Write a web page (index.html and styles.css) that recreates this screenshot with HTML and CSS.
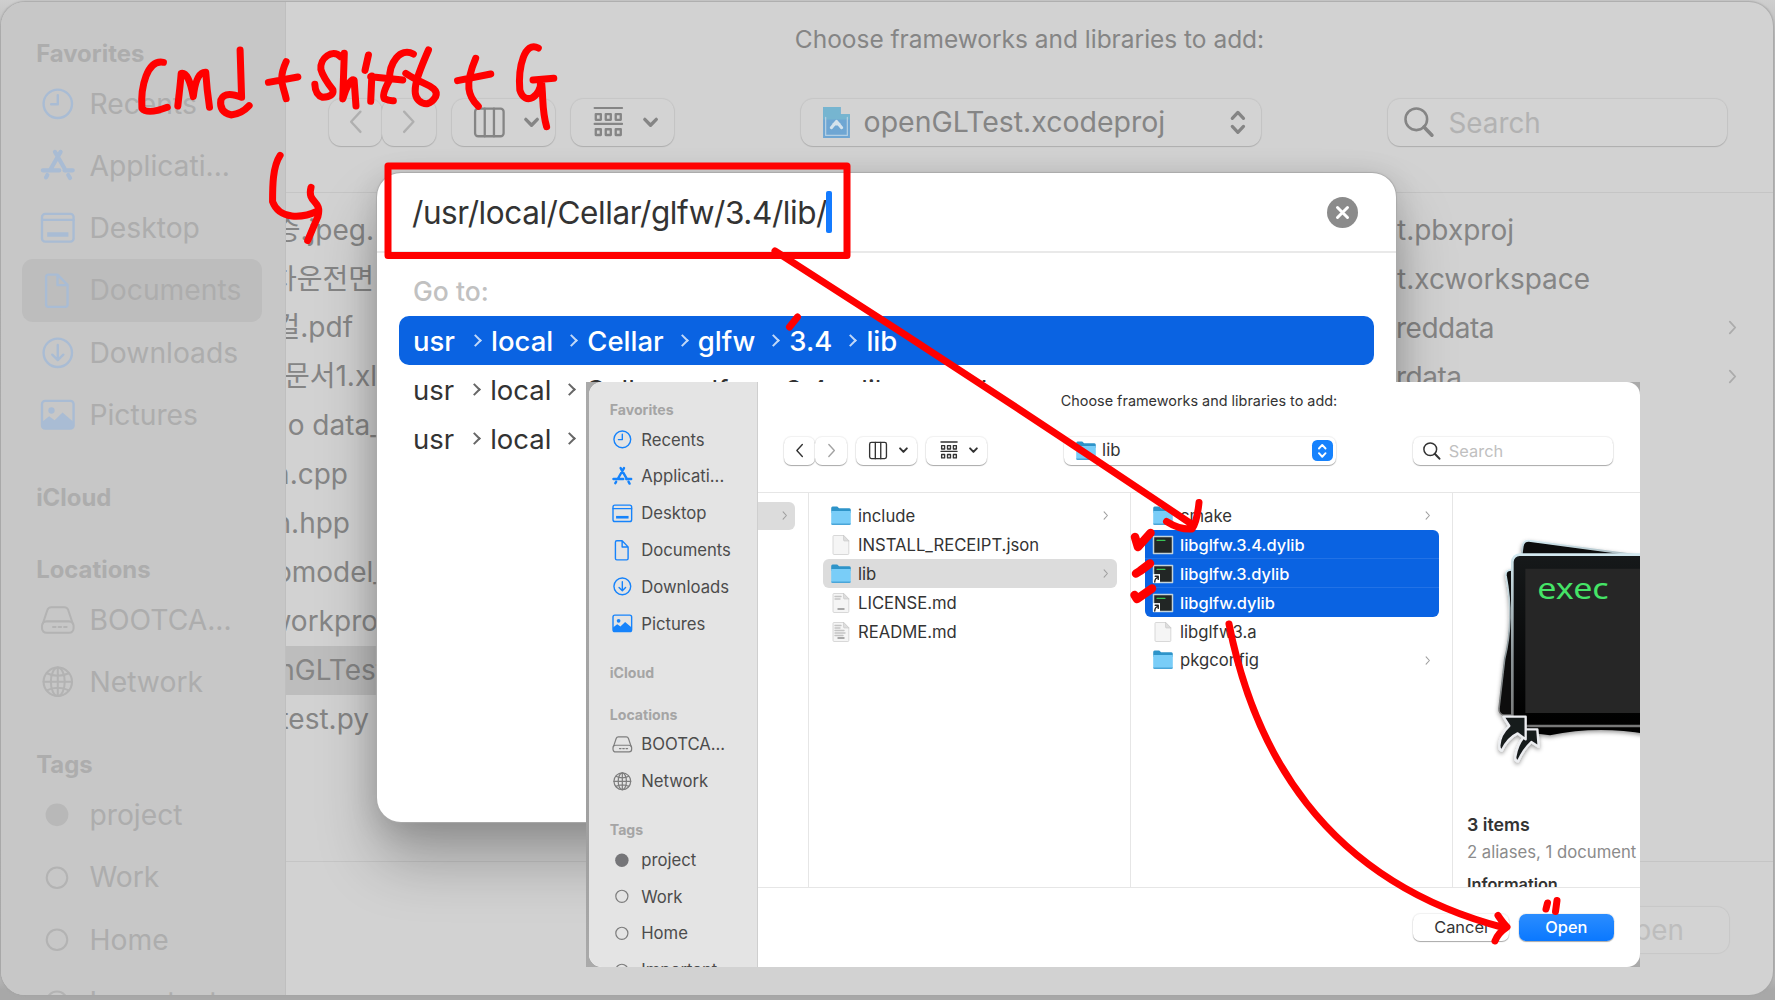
FILE: index.html
```html
<!DOCTYPE html>
<html lang="en">
<head>
<meta charset="utf-8">
<title>Choose frameworks and libraries to add</title>
<link rel="stylesheet" href="styles.css">
</head>
<body>
<svg class="sprite" aria-hidden="true">
  <symbol id="clock" viewBox="0 0 20 20"><circle cx="10" cy="10" r="9"/><path d="M10 4.500V10.300H5.800"/></symbol>
  <symbol id="apps" viewBox="0 0 20 20"><path stroke-width="2.600" d="M8.200 1.200L15 13M16.600 15.800l1.200 2M11.800 1.200L5.200 12.600M3.400 15.800l-.9 1.600M.5 12.900h10.500M14.200 12.900H19.500"/></symbol>
  <symbol id="desktop" viewBox="0 0 20 20"><rect x="0" y="1.200" width="20" height="17.600" rx="2"/><path d="M0 5h20"/><path stroke-width="2.800" stroke-linecap="butt" d="M3.300 14.200h13.400"/></symbol>
  <symbol id="doc" viewBox="0 0 20 20"><path d="M2.600 1.300a1.500 1.500 0 0 1 1.500-1.500h5.700l6.400 6.500v12.400a1.500 1.500 0 0 1-1.500 1.500H4.100a1.500 1.500 0 0 1-1.500-1.500zM9.800 0v6.400h6.400"/></symbol>
  <symbol id="down" viewBox="0 0 20 20"><circle cx="10" cy="10" r="9"/><path d="M10 5v9.500M6.500 11.200L10 14.700l3.500-3.500"/></symbol>
  <symbol id="pic" viewBox="0 0 20 20"><rect x="0" y="1.200" width="20" height="17.600" rx="2"/><circle cx="6" cy="7.300" r="2" fill="currentColor" stroke="none"/><path fill="currentColor" stroke="none" d="M0 14.500l4.500-3.500 3.500 2.500 5-5 7 6V18.500H0z"/></symbol>
  <symbol id="disk" viewBox="0 0 20 20"><rect x="0" y="11" width="20" height="7.200" rx="2.800"/><path d="M.5 12.500L3.400 3.800Q4 2 5.800 2h8.400q1.800 0 2.400 1.800L19.500 12.500"/><path d="M7 14.600h1.600M10.500 14.600h1.600M14 14.600h1.600"/></symbol>
  <symbol id="globe" viewBox="0 0 20 20"><circle cx="10" cy="10" r="9"/><ellipse cx="10" cy="10" rx="4.400" ry="9"/><path d="M10 1v18M1 10h18M3 4.600q7 3.200 14 0M3 15.400q7-3.200 14 0"/></symbol>
  <symbol id="dot" viewBox="0 0 20 20"><circle cx="9.500" cy="10" r="7.200" fill="currentColor" stroke="none"/></symbol>
  <symbol id="ring" viewBox="0 0 20 20"><circle cx="9.500" cy="10" r="6.500"/></symbol>
  <symbol id="left" viewBox="0 0 10 16"><path d="M8 1.500L2 8l6 6.500"/></symbol>
  <symbol id="right" viewBox="0 0 10 16"><path d="M2 1.500L8 8l-6 6.500"/></symbol>
  <symbol id="chev" viewBox="0 0 10 7"><path stroke-width="2.200" d="M1.200 1.400L5 5.300l3.800-3.900"/></symbol>
  <symbol id="cols" viewBox="0 0 20 18"><rect x=".7" y="0" width="18.600" height="18" rx="2"/><path d="M7 0v18M13 0v18"/></symbol>
  <symbol id="group" viewBox="0 0 20 20"><path d="M.500 0h19M.500 11h19"/><path stroke-width="1.600" d="M1.300 4.200h3.500v4H1.300zM8.200 4.200h3.500v4H8.200zM15.100 4.200h3.500v4h-3.500zM1.300 14.700h3.500v4H1.300zM8.200 14.700h3.500v4H8.200zM15.100 14.700h3.500v4h-3.500z"/></symbol>
  <symbol id="updown" viewBox="0 0 12 20"><path stroke-width="2.400" d="M1.800 7L6 2.500 10.200 7M1.800 13L6 17.500l4.200-4.500"/></symbol>
  <symbol id="search" viewBox="0 0 20 20"><circle cx="8.200" cy="8.200" r="7.200" stroke-width="1.700"/><path stroke-width="2.400" d="M13.300 13.300L18.600 18.800"/></symbol>
  <symbol id="folder" viewBox="0 0 20 20"><path fill="#2e94c9" d="M.2 2.200Q.2.600 1.600.600h4.600l1.900 1.600h10.300q1.400 0 1.400 1.600v3H.2z"/><path fill="#79cdf8" d="M.2 5h19.600v12.500q0 1.300-1.300 1.300H1.500Q.2 18.800.2 17.500z"/><path fill="#4aa5d8" d="M.2 17.500h19.600q-.2 1.600-1.400 1.600H1.600Q.4 19.100.2 17.500z"/></symbol>
  <symbol id="file" viewBox="0 0 20 20"><path fill="#f5f5f5" stroke="#cfcfcf" stroke-width=".8" d="M2 1.200Q2 .5 2.700.5h9.800L17.800 6v12.600q0 .9-.9.900H2.900Q2 19.500 2 18.600z"/><path fill="#ddd" stroke="#c6c6c6" stroke-width=".6" d="M12.500.5V5q0 1 1 1h4.300z"/></symbol>
  <symbol id="filetext" viewBox="0 0 20 20"><use href="#file"/><path stroke="#c4c4c4" stroke-width="1.400" d="M4 3.500h6M4 6h5"/><path stroke="#8e8e8e" stroke-width="1.400" d="M7 16h6"/></symbol>
  <symbol id="filedense" viewBox="0 0 20 20"><use href="#filetext"/><path stroke="#c4c4c4" stroke-width="1.400" d="M4 8.500h9M4 11h10M4 13.500h8"/></symbol>
  <symbol id="term" viewBox="0 0 20 18"><rect x=".5" y=".5" width="19" height="17" fill="#222625" stroke="#c3d3da"/><path stroke="#39c455" stroke-width="1.200" stroke-dasharray="2 .6" d="M4 4.300h8"/></symbol>
  <symbol id="alias" viewBox="0 0 8 10"><path fill="#fff" d="M0 0h8v10H0z"/><path stroke="#222" stroke-width="1.600" d="M2 9q0-4 4-5.500M2.500 2.500H6V6"/></symbol>
</svg>

<main class="screen">
  <section class="dialog back">
    <aside class="sidebar">
      <h2>Favorites</h2>
      <ul>
        <li><svg><use href="#clock"/></svg>Recents</li>
        <li><svg><use href="#apps"/></svg>Applicati...</li>
        <li><svg><use href="#desktop"/></svg>Desktop</li>
        <li class="current"><svg><use href="#doc"/></svg>Documents</li>
        <li><svg><use href="#down"/></svg>Downloads</li>
        <li><svg><use href="#pic"/></svg>Pictures</li>
      </ul>
      <h2>iCloud</h2>
      <h2>Locations</h2>
      <ul class="plain">
        <li><svg><use href="#disk"/></svg>BOOTCA...</li>
        <li><svg><use href="#globe"/></svg>Network</li>
      </ul>
      <h2>Tags</h2>
      <ul class="plain">
        <li class="tag"><svg><use href="#dot"/></svg>project</li>
        <li><svg><use href="#ring"/></svg>Work</li>
        <li><svg><use href="#ring"/></svg>Home</li>
        <li><svg><use href="#ring"/></svg>Important</li>
      </ul>
    </aside>
    <div class="pane">
      <h1>Choose frameworks and libraries to add:</h1>
      <div class="toolbar">
        <button class="nav faint"><svg><use href="#left"/></svg></button><button class="nav faint"><svg><use href="#right"/></svg></button>
        <button class="view"><svg class="glyph"><use href="#cols"/></svg><svg class="caret"><use href="#chev"/></svg></button>
        <button class="view"><svg class="glyph"><use href="#group"/></svg><svg class="caret"><use href="#chev"/></svg></button>
        <div class="popup"><svg class="proj" viewBox="0 0 26 30"><path fill="#6fa6d3" d="M0 0h17v7h9v23H0z"/><path fill="#76b5d0" d="M0 0h17v7h9v5H0z"/><path fill="none" stroke="#b4cfe3" stroke-width="1.200" d="M2.500 10v17.500h21V10"/><path fill="none" stroke="#d5e2ec" stroke-width="3" d="M8 20l5-6 5 6M10.500 16.500h5"/></svg><span>openGLTest.xcodeproj</span><i class="stepper"><svg><use href="#updown"/></svg></i></div>
        <div class="search"><svg><use href="#search"/></svg><span>Search</span></div>
      </div>
      <div class="browser">
        <ul class="clipped">
          <li style="--end:3px">증.jpeg.</li>
          <li style="--end:3px">차운전면</li>
          <li style="--end:24px">컬.pdf</li>
          <li style="--end:0px">문서1.xl</li>
          <li style="--end:-6px">o data_</li>
          <li style="--end:29px">n.cpp</li>
          <li style="--end:27px">n.hpp</li>
          <li style="--end:-9px">omodel_</li>
          <li style="--end:-1px">workpro</li>
          <li class="current" style="--end:-8px">nGLTest</li>
          <li style="--end:8px">test.py</li>
        </ul>
        <ul class="project">
          <li>t.pbxproj</li>
          <li>t.xcworkspace</li>
          <li class="tight">reddata<svg><use href="#right"/></svg></li>
          <li class="tight">rdata<svg><use href="#right"/></svg></li>
        </ul>
      </div>
      <footer><button class="push">Open</button></footer>
    </div>
  </section>

  <section class="goto">
    <header><span class="path">/usr/local/Cellar/glfw/3.4/lib/</span><i class="cursor"></i>
      <svg class="clear" viewBox="0 0 31 31"><circle cx="15.500" cy="15.500" r="15.500"/><path d="M10.500 10.500l10 10M20.500 10.500l-10 10"/></svg></header>
    <h2>Go to:</h2>
    <ol class="on"><li>usr</li><li>local</li><li>Cellar</li><li>glfw</li><li>3.4</li><li>lib</li></ol>
    <ol><li>usr</li><li>local</li><li>Cellar</li><li>glfw</li><li>3.4</li><li>lib</li><li>cmake</li></ol>
    <ol><li>usr</li><li>local</li><li></li></ol>
  </section>

  <div class="inset">
  <section class="dialog front">
    <aside class="sidebar">
      <h2>Favorites</h2>
      <ul>
        <li><svg><use href="#clock"/></svg>Recents</li>
        <li><svg><use href="#apps"/></svg>Applicati...</li>
        <li><svg><use href="#desktop"/></svg>Desktop</li>
        <li><svg><use href="#doc"/></svg>Documents</li>
        <li><svg><use href="#down"/></svg>Downloads</li>
        <li><svg><use href="#pic"/></svg>Pictures</li>
      </ul>
      <h2>iCloud</h2>
      <h2>Locations</h2>
      <ul class="plain">
        <li><svg><use href="#disk"/></svg>BOOTCA...</li>
        <li><svg><use href="#globe"/></svg>Network</li>
      </ul>
      <h2>Tags</h2>
      <ul class="plain">
        <li class="tag"><svg><use href="#dot"/></svg>project</li>
        <li><svg><use href="#ring"/></svg>Work</li>
        <li><svg><use href="#ring"/></svg>Home</li>
        <li><svg><use href="#ring"/></svg>Important</li>
      </ul>
    </aside>
    <div class="pane">
      <h1>Choose frameworks and libraries to add:</h1>
      <div class="toolbar">
        <button class="nav"><svg><use href="#left"/></svg></button><button class="nav faint"><svg><use href="#right"/></svg></button>
        <button class="view"><svg class="glyph"><use href="#cols"/></svg><svg class="caret"><use href="#chev"/></svg></button>
        <button class="view"><svg class="glyph"><use href="#group"/></svg><svg class="caret"><use href="#chev"/></svg></button>
        <div class="popup"><svg class="fold"><use href="#folder"/></svg><span>lib</span><i class="stepper"><svg><use href="#updown"/></svg></i></div>
        <div class="search"><svg><use href="#search"/></svg><span>Search</span></div>
      </div>
      <div class="browser">
        <ul class="files parent"><li class="current"><svg class="more"><use href="#right"/></svg></li></ul>
        <ul class="files">
          <li><svg><use href="#folder"/></svg>include<svg class="more"><use href="#right"/></svg></li>
          <li><svg><use href="#file"/></svg>INSTALL_RECEIPT.json</li>
          <li class="current"><svg><use href="#folder"/></svg>lib<svg class="more"><use href="#right"/></svg></li>
          <li><svg><use href="#filetext"/></svg>LICENSE.md</li>
          <li><svg><use href="#filedense"/></svg>README.md</li>
        </ul>
        <ul class="files">
          <li><svg><use href="#folder"/></svg>cmake<svg class="more"><use href="#right"/></svg></li>
          <li class="picked first"><svg><use href="#term"/></svg>libglfw.3.4.dylib</li>
          <li class="picked"><svg><use href="#term"/></svg><svg class="badge"><use href="#alias"/></svg>libglfw.3.dylib</li>
          <li class="picked last"><svg><use href="#term"/></svg><svg class="badge"><use href="#alias"/></svg>libglfw.dylib</li>
          <li><svg><use href="#file"/></svg>libglfw3.a</li>
          <li><svg><use href="#folder"/></svg>pkgconfig<svg class="more"><use href="#right"/></svg></li>
        </ul>
        <div class="preview">
          <svg class="stack" viewBox="9 0 561 780">
            <defs>
              <filter id="soft" x="-20%" y="-20%" width="140%" height="140%"><feDropShadow dx="0" dy="6" stdDeviation="7" flood-opacity=".4"/></filter>
              <linearGradient id="edge" x1="0" y1="0" x2="0" y2="1"><stop offset="0" stop-color="#d3e9f0"/><stop offset=".6" stop-color="#8b9497"/><stop offset="1" stop-color="#777"/></linearGradient>
              <linearGradient id="ink" x1="0" y1="0" x2="0" y2="1"><stop offset="0" stop-color="#16191a"/><stop offset="1" stop-color="#000"/></linearGradient>
            </defs>
            <g filter="url(#soft)">
              <path fill="#080909" stroke="url(#edge)" stroke-width="6" d="M214 110l4-32q3-18 24-15l330 44v80H214z"/>
              <path fill="#080909" stroke="url(#edge)" stroke-width="5" d="M190 148l-14 3q-10 3-8 16 25 130-4 250L147 565q-1 15 12 20h60z"/>
              <path fill="#000" d="M190 590h400v52q-150-26-290 4l-80-10z"/>
            </g>
            <rect x="187" y="104" width="440" height="514" rx="22" fill="url(#ink)" stroke="url(#edge)" stroke-width="8"/>
            <path fill="#262626" d="M226 146h360v433H226z"/>
            <text x="262" y="237" textLength="214" lengthAdjust="spacingAndGlyphs">exec</text>
            <g fill="#181a1e" stroke="#eceef1" stroke-width="7" stroke-linejoin="round" filter="url(#soft)">
              <path d="M222 628h40l4 52-22-14q-24 22-40 58-10-2-8-14 5-35 26-60z"/>
              <path d="M160 590h67v68l-24-18q-30 14-48 52-8-4-7-16 2-32 30-58z"/>
            </g>
          </svg>
          <h3>3 items</h3>
          <p>2 aliases, 1 document</p>
          <h4>Information</h4>
        </div>
      </div>
      <footer><button class="push">Cancel</button><button class="push default">Open</button></footer>
    </div>
  </section>
  </div>

  <svg class="ink" viewBox="0 0 1775 1000">
    <rect x="388" y="166" width="459" height="89.500"/>
    <g transform="scale(.3775 .3333)">
      <path d="M433 187C390 178 372 260 376 325Q390 345 443 322"/>
      <path d="M471 318Q478 250 480 220Q500 215 512 290Q520 215 545 217Q548 270 555 322"/>
      <path d="M636 150L640 292Q595 272 585 300Q580 335 612 345Q640 342 660 317"/>
      <path d="M711 247L789 231M758 185C736 240 750 255 758 296"/>
      <path d="M902 170C880 145 847 175 850 208Q855 230 882 270Q885 290 855 292Q835 285 834 253"/>
      <path d="M912 160L908 297Q925 235 938 240L943 318M976 165L967 211M985 228L982 304M982 230L1067 240"/>
      <path d="M1095 162C1060 140 1030 190 1032 240Q1010 285 1018 296Q1030 303 1042 302"/>
      <path d="M1135 150C1110 215 1085 280 1110 302Q1135 325 1154 290C1165 260 1120 255 1075 220"/>
      <path d="M1212 242L1300 222M1260 175C1230 255 1240 290 1267 319"/>
      <path d="M1426 144C1390 122 1372 200 1377 270C1390 320 1435 290 1432 242M1412 240L1467 235M1434 240C1440 300 1435 330 1448 380"/>
      <path d="M742 466C722 500 722 560 722 605C740 660 800 655 842 633"/>
      <path d="M824 562C812 610 855 600 842 650L815 722"/>
    </g>
    <path d="M775 251Q985 385 1193 525M1166.500 521.500Q1180 530 1192 529Q1197 522 1199 502.500"/>
    <path class="bold" d="M1135 537L1138 547L1150.500 533M1136 573.500L1140 571L1150 563.500M1134.500 595L1137 599L1152 588.500"/>
    <path d="M797.500 317L789.500 327"/>
    <path d="M1229 624C1253 745 1320 880 1505 928M1498 915.500Q1503 923 1507 927Q1498 933 1495 941"/>
    <path d="M1547.500 903L1546 909M1557 900.500L1555.500 911.500"/>
  </svg>
</main>
</body>
</html>
```
FILE: styles.css
```css
* { box-sizing: border-box; }
body { margin: 0; font-family: Inter, "Noto Sans CJK KR", sans-serif; }
h1, h2, h3, h4, p, ul, ol { margin: 0; padding: 0; list-style: none; white-space: nowrap; }
button { font: inherit; color: inherit; padding: 0; }
svg { fill: none; stroke: currentColor; stroke-width: 1.5; stroke-linecap: round; stroke-linejoin: round; flex: none; overflow: visible; }
symbol { overflow: visible; }
.sprite { position: absolute; width: 0; height: 0; }
.screen { position: relative; width: 1775px; height: 1000px; overflow: hidden; background: linear-gradient(#cfcfcf 0, #bbb 40px, #b4b4b4 980px, #a8a8a8 990px); }

/* File dialog, sized in multiples of --u (one point of the window) */
.dialog { display: flex; overflow: hidden; background: var(--bg); color: var(--text); }
.back {
  --u: 2.224px; --bg: #d2d2d2; --side: #c7c7c7; --side-edge: #bfbfbf; --text: #858585; --muted: #b2b2b2; --label: #adadad;
  --head: #adadad; --tint: #a9bcd4; --plain: #b3b3b3; --tag: #b8b8b8; --line: #c5c5c5; --current: #bdbdbd; --btn: #d3d3d3; --shade: rgba(0,0,0,.13);
  position: absolute; left: 1px; top: 2px; width: 1772px; height: 993px; border-radius: 24px; box-shadow: 0 0 2px 1px #a4a4a4;
}
.inset { position: absolute; left: 586px; top: 382px; width: 1054px; height: 585px; overflow: hidden; background: linear-gradient(#aaa, #a0a0a0 80%, #aaa); display: flex; padding-left: 3px; }
.front {
  --u: 1.311px; --bg: #fff; --side: #e4e4e4; --side-edge: #cfcfcf; --text: #333; --muted: #c0c0c0; --label: #4c4c4c;
  --head: #a5a5a5; --tint: #1683fb; --plain: #7d7d7d; --tag: #757578; --line: #e6e6e6; --current: #dcdcdc; --btn: #fff; --shade: rgba(0,0,0,.3);
  width: 1051px; height: 585px; border-radius: 13px;
}
.sidebar { background: var(--side); border-right: 1px solid var(--side-edge); color: var(--label); flex: none; position: relative; }
.back .sidebar { width: 285px; padding-top: 32.700px; }
.front .sidebar { --u: 1.3135px; width: 169px; padding-top: 17px; }
.sidebar h2 { font-size: calc(var(--u) * 10.750); font-weight: 650; height: calc(var(--u) * 17); line-height: calc(var(--u) * 17); padding-left: calc(var(--u) * 15.800); color: var(--head); margin-bottom: calc(var(--u) * 15); }
.sidebar h2:has(+ ul) { margin-bottom: 0; }
.sidebar ul { margin-bottom: calc(var(--u) * 15); }
.sidebar li { display: flex; align-items: center; gap: calc(var(--u) * 7.100); height: calc(var(--u) * 28); margin: 0 calc(var(--u) * 10.200) 0 calc(var(--u) * 9.300); padding-left: calc(var(--u) * 9.200); border-radius: calc(var(--u) * 5); font-size: calc(var(--u) * 12.700); }
.sidebar li svg { width: calc(var(--u) * 14.200); height: calc(var(--u) * 14.200); color: var(--tint); }
.sidebar .plain svg { color: var(--plain); stroke-width: 1.300; }
.sidebar .tag svg { color: var(--tag); }
.current { background: var(--current); }

.pane { flex: 1; display: flex; flex-direction: column; min-width: 0; }
.pane h1 { font-size: calc(var(--u) * 11); font-weight: 400; text-align: center; line-height: 28px; }
.back h1 { padding-top: 23px; height: 97px; }
.front h1 { padding-top: 5px; height: 55px; }
.toolbar { display: flex; padding: 0 calc(var(--u) * 20); height: calc(var(--u) * 21); flex: none; }
.back .toolbar { padding: 0 46px 0 43px; }
.front .toolbar { padding: 0 27px 0 26px; }
.toolbar > *, .push { background: var(--btn); border: 0; border-radius: calc(var(--u) * 5.500); box-shadow: 0 0 1px 1px rgba(0,0,0,.06), 0 1px 1px var(--shade); height: 100%; display: flex; align-items: center; justify-content: center; }
.nav { width: calc(var(--u) * 24); padding-bottom: 1px; }
.nav svg { width: calc(var(--u) * 7); height: calc(var(--u) * 11.500); }
.faint svg { opacity: .45; }
.toolbar .view { width: calc(var(--u) * 46.300); margin-left: calc(var(--u) * 7.200); justify-content: flex-start; padding-left: calc(var(--u) * 10); gap: calc(var(--u) * 8.500); }
.glyph { width: calc(var(--u) * 13.800); height: calc(var(--u) * 13); }
.caret { width: calc(var(--u) * 6.800); height: calc(var(--u) * 5); }
.toolbar .popup { width: calc(var(--u) * 207); margin-left: auto; justify-content: flex-start; gap: calc(var(--u) * 5); padding: 0 calc(var(--u) * 2.500) 0 calc(var(--u) * 8.500); font-size: calc(var(--u) * 12.800); }
.popup span { position: relative; top: -1px; }
.proj { width: 27px; height: 31px; stroke: none; }
.back .toolbar .popup { padding-left: 22px; gap: 14px; }
.fold { width: 20px; height: 20px; stroke: none; }
.stepper { margin-left: auto; width: calc(var(--u) * 16); height: calc(var(--u) * 16); border-radius: calc(var(--u) * 4); display: flex; align-items: center; justify-content: center; }
.stepper svg { width: calc(var(--u) * 8); height: calc(var(--u) * 12); }
.front .stepper { background: #1682fd; color: #fff; }
.toolbar .search { width: calc(var(--u) * 152.500); margin-left: auto; justify-content: flex-start; padding-left: calc(var(--u) * 7.200); gap: calc(var(--u) * 6.600); font-size: calc(var(--u) * 12.500); }
.search span { color: var(--muted); padding-top: 1px; }
.search svg { width: calc(var(--u) * 13.500); height: calc(var(--u) * 13.500); }
.browser { display: flex; border: solid var(--line); border-width: 1px 0; overflow: hidden; }
.back .browser { margin-top: 46px; height: 670px; padding-top: 13px; }
.front .browser { margin-top: 27px; height: 396px; }
footer { display: flex; justify-content: flex-end; }
.back footer { padding: 45px 44px 0 0; }
.front footer { padding: 26px 26px 0 0; gap: 10px; }
.push { width: calc(var(--u) * 72.700); height: calc(var(--u) * 21); font-size: calc(var(--u) * 12.500); }
.back .push { color: #bdbdbd; width: 161px; box-shadow: 0 0 1px 1px rgba(0,0,0,.05); }
.push.default { background: linear-gradient(#2b8dff, #0a78ff); color: #fff; font-weight: 500; }

.clipped { width: 91px; overflow: hidden; font-size: 28px; }
.clipped li { height: 48.900px; line-height: 48.900px; display: flex; justify-content: flex-end; text-indent: 0; padding-right: max(0px, var(--end)); margin-right: min(0px, var(--end)); }
.project { margin-left: 1020px; flex: 1; font-size: 28px; overflow: hidden; }
.project li { height: 48.900px; display: flex; align-items: center; justify-content: space-between; padding-right: 36px; }
.project .tight { letter-spacing: -.5px; margin-left: -1px; }
.project svg { width: 9px; height: 15px; opacity: .5; stroke-width: 2; }

.files { width: 322px; flex: none; border-right: 1px solid var(--line); padding: 9px 13.500px 9px 14px; font-size: 16.650px; }
.files.parent { width: 51px; padding-left: 0; padding-right: 13px; }
.files.parent li { border-radius: 0 6px 6px 0; }
.files li { position: relative; height: 28.900px; display: flex; align-items: center; gap: 7px; padding: 0 8px; border-radius: 6px; }
.files li > svg { width: 20px; height: 20px; stroke: none; }
.files li > .more { width: 5.500px; height: 9px; margin-left: auto; stroke: #a0a0a0; stroke-width: 2; }
.files li.picked { background: #0a63e2; color: #fff; font-size: 16.450px; font-weight: 500; border-radius: 0; box-shadow: inset 0 -1px 0 #2272e6; }
.files li.first { border-radius: 6px 6px 0 0; }
.files li.last { border-radius: 0 0 6px 6px; box-shadow: none; }
.files li .badge { position: absolute; left: 8px; bottom: 5px; width: 7px; height: 9px; }
.preview { flex: 1; min-width: 0; padding-top: 27px; }
.stack { display: block; width: 187px; height: 260px; stroke: none; overflow: hidden; }
.stack text { font: 85px "Noto Sans", "Open Sans", sans-serif; fill: #45e467; }
.preview h3, .preview p, .preview h4 { padding-left: 14px; line-height: 26px; }
.preview h3 { font-size: 17.800px; font-weight: 600; padding-top: 32px; }
.preview p { font-size: 16.700px; color: #8b8b8b; padding-top: 1px; }
.preview h4 { font-size: 16.300px; font-weight: 600; padding-top: 6px; }

/* Go-to-folder sheet; its shadow stays off the sidebar */
.goto { position: absolute; left: 377px; top: 173px; width: 1019px; height: 649px; border-radius: 24px; background: #fff; color: #333; box-shadow: 0 0 1px 1px #aaa, 0 38px 60px rgba(0,0,0,.27), 0 5px 30px rgba(0,0,0,.14); clip-path: inset(-40px -110px -150px -91px); }
.goto header { height: 80px; border-bottom: 2px solid #e9e9e9; display: flex; align-items: center; padding: 0 38px 0 35px; font-size: 31.500px; }
.path { letter-spacing: -.430px; white-space: nowrap; }
.cursor { width: 6px; height: 42px; background: #147bff; border-radius: 2px; margin-left: -1px; }
.clear { width: 31px; height: 31px; margin-left: auto; }
.clear circle { fill: #8b8b8b; stroke: none; }
.clear path { stroke: #fff; stroke-width: 3; }
.goto h2 { font-size: 26.500px; font-weight: 550; color: #c1c1c1; padding: 19px 0 0 36px; height: 62.500px; line-height: 38px; }
.goto ol { display: flex; align-items: center; height: 49px; margin: 0 22px; padding: 1px 0 0 14px; border-radius: 10px; font-size: 27.500px; overflow: hidden; }
.goto ol.on { background: #0a63e2; color: #fff; font-weight: 550; }
.goto li { display: flex; align-items: center; }
.goto li + li::before { content: ""; width: 7px; height: 7px; border: solid; border-width: 2px 2px 0 0; transform: rotate(45deg); margin: 0 11px 0 14px; opacity: .75; }
.goto li:nth-child(2)::before { margin-left: 16px; }

/* Red pen marks over everything */
.ink { position: absolute; inset: 0; width: 1775px; height: 1000px; color: #f00; stroke-width: 7; }
.ink path { vector-effect: non-scaling-stroke; }
.ink .bold { stroke-width: 8.500px; }
```
